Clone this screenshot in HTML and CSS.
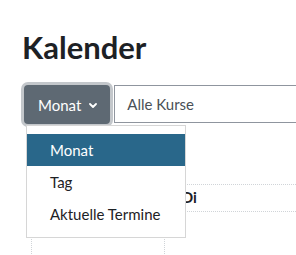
FILE: index.html
```html
<!DOCTYPE html>
<html lang="de">

<head>
    <meta charset="UTF-8">
    <meta name="viewport" content="width=device-width, initial-scale=1.0">
    <title>Kalender</title>
    <link rel="stylesheet" href="styles.css">
</head>

<body>
    <div class="page">
        <h2 class="page-title">Kalender</h2>
        <div class="controls">
            <div class="view-select">
                <button class="btn-view">Monat
                    <svg class="chevron" width="8" height="5" viewBox="0 0 8 5">
                        <path d="M1 1 L4 4 L7 1" fill="none" stroke="#fff" stroke-width="1.8" stroke-linecap="round" stroke-linejoin="round" />
                    </svg>
                </button>
                <ul class="view-menu">
                    <li class="view-item active">Monat</li>
                    <li class="view-item">Tag</li>
                    <li class="view-item">Aktuelle Termine</li>
                </ul>
            </div>
            <div class="course-select">Alle Kurse</div>
        </div>
        <table class="calendar">
            <thead>
                <tr>
                    <th></th>
                    <th>Di</th>
                    <th></th>
                </tr>
            </thead>
            <tbody>
                <tr>
                    <td></td>
                    <td></td>
                    <td></td>
                </tr>
            </tbody>
        </table>
    </div>
</body>

</html>
```

FILE: styles.css
```css
* {
    box-sizing: border-box;
}

body {
    margin: 0;
    background: #fff;
    font-family: Lato, "Open Sans", sans-serif;
    color: #1d2125;
}

.page {
    padding: 29px 0 0 22px;
    height: 255px;
    overflow: hidden;
}

.page-title {
    margin: 0;
    font-size: 31px;
    line-height: 37px;
    font-weight: 700;
}

.controls {
    display: flex;
    align-items: flex-start;
    margin-top: 19px;
    margin-left: 2px;
}

.view-select {
    position: relative;
    flex-shrink: 0;
}

.btn-view {
    display: flex;
    align-items: center;
    gap: 8px;
    height: 39px;
    padding: 0 13px 0 14px;
    background-color: #5e6973;
    color: #fff;
    border: none;
    border-radius: 4px;
    font-family: inherit;
    font-size: 15px;
    box-shadow: 0 0 0 3px #c3c7cb;
}

.chevron {
    margin-top: 1px;
}

.view-menu {
    position: absolute;
    top: calc(100% + 1px);
    left: 2px;
    width: 160px;
    margin: 0;
    padding: 8px 0 7px;
    list-style: none;
    background: #fff;
    border: 1px solid #d6d6d6;
    z-index: 2;
}

.view-item {
    height: 32px;
    line-height: 32px;
    padding: 0 23px;
    font-size: 15px;
    white-space: nowrap;
}

.view-item.active {
    background-color: #29678a;
    color: #fff;
}

.course-select {
    flex-shrink: 0;
    width: 220px;
    height: 38px;
    margin-left: 4px;
    padding-left: 12px;
    line-height: 36px;
    border: 1px solid #8f959e;
    font-size: 15px;
    color: #495057;
}

.calendar {
    margin-top: 60px;
    margin-left: 9px;
    border-collapse: collapse;
    table-layout: fixed;
    width: 400px;
}

.calendar th {
    width: 132px;
    height: 27px;
    padding: 0 0 2px 17px;
    line-height: 24px;
    text-align: left;
    font-size: 15px;
    font-weight: 700;
    border-top: 1px dotted #d0d4d8;
    border-bottom: 1px dotted #d0d4d8;
}

.calendar td {
    height: 80px;
    border-left: 1px dotted #d0d4d8;
}
```
